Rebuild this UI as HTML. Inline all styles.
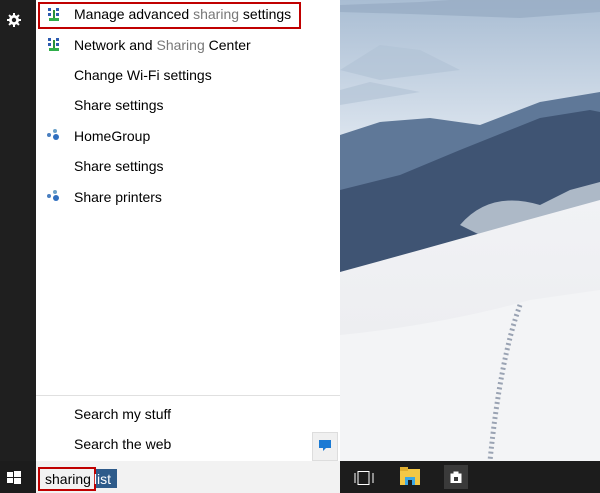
<!DOCTYPE html>
<html><head><style>
*{margin:0;padding:0;box-sizing:border-box}
body{width:600px;height:493px;overflow:hidden;position:relative;background:#1f1f1f;font-family:"Liberation Sans",sans-serif;}
#left{position:absolute;left:0;top:0;width:36px;height:461px;background:#1f1f1f}
#panel{position:absolute;left:36px;top:0;width:304px;height:461px;background:#fff}
.it{position:absolute;left:38px;font-size:14px;color:#000;line-height:16px}
.g{color:#777}
#wall{position:absolute;left:340px;top:0;width:260px;height:461px}
#tb{position:absolute;left:0;top:461px;width:600px;height:32px;background:#1c1c1c}
#sb{position:absolute;left:36px;top:461px;width:304px;height:32px;background:#f2f2f2}
</style></head><body>
<div id="left">
<svg style="position:absolute;left:6px;top:12px" width="16" height="16" viewBox="0 0 16 16"><g fill="#fff"><circle cx="8" cy="8" r="5"/><rect x="7" y="1" width="2" height="14"/><rect x="1" y="7" width="14" height="2"/><rect x="7" y="1" width="2" height="14" transform="rotate(45 8 8)"/><rect x="7" y="1" width="2" height="14" transform="rotate(-45 8 8)"/></g><circle cx="8" cy="8" r="2.2" fill="#1f1f1f"/></svg>
</div>
<div id="panel">
<div style="position:absolute;left:2px;top:2px;width:263px;height:27px;border:2px solid #c00000"></div>
<svg style="position:absolute;left:11px;top:7px" width="14" height="15"><g fill="#2d5bb0"><rect x="1" y="1" width="3" height="3"/><rect x="9" y="1" width="3" height="3"/><rect x="1" y="6" width="3" height="3"/><rect x="9" y="6" width="3" height="3"/></g><rect x="6" y="3" width="2" height="8" fill="#2a8f3a"/><rect x="2" y="11" width="10" height="3" fill="#2fae4a"/></svg>
<svg style="position:absolute;left:11px;top:37px" width="14" height="15"><g fill="#2d5bb0"><rect x="1" y="1" width="3" height="3"/><rect x="9" y="1" width="3" height="3"/><rect x="1" y="6" width="3" height="3"/><rect x="9" y="6" width="3" height="3"/></g><rect x="6" y="3" width="2" height="8" fill="#2a8f3a"/><rect x="2" y="11" width="10" height="3" fill="#2fae4a"/></svg>
<svg style="position:absolute;left:10px;top:128px" width="16" height="14"><circle cx="3" cy="7" r="2" fill="#4a7fc0"/><circle cx="9" cy="3" r="2" fill="#6aa0c8"/><circle cx="10" cy="9" r="3" fill="#2f6fbf"/></svg>
<svg style="position:absolute;left:10px;top:189px" width="16" height="14"><circle cx="3" cy="7" r="2" fill="#4a7fc0"/><circle cx="9" cy="3" r="2" fill="#6aa0c8"/><circle cx="10" cy="9" r="3" fill="#2f6fbf"/></svg>
<div class="it" style="top:6px">Manage advanced <span class="g">sharing</span> settings</div>
<div class="it" style="top:37px">Network and <span class="g">Sharing</span> Center</div>
<div class="it" style="top:67px">Change Wi-Fi settings</div>
<div class="it" style="top:97px">Share settings</div>
<div class="it" style="top:128px">HomeGroup</div>
<div class="it" style="top:158px">Share settings</div>
<div class="it" style="top:189px">Share printers</div>
<div style="position:absolute;left:0;top:395px;width:304px;height:1px;background:#e0e0e0"></div>
<div class="it" style="top:406px">Search my stuff</div>
<div class="it" style="top:436px">Search the web</div>
<div style="position:absolute;left:276px;top:432px;width:26px;height:29px;background:#f0f0f0;border:1px solid #ddd"></div>
<svg style="position:absolute;left:283px;top:440px" width="12" height="12"><path d="M0 0H12V8H7L4 11V8H0Z" fill="#1a7ad4"/></svg>
</div>
<svg id="wall" viewBox="0 0 260 461" preserveAspectRatio="none">
<defs><linearGradient id="sky" x1="0" y1="0" x2="0" y2="1"><stop offset="0" stop-color="#a9bdd3"/><stop offset="0.3" stop-color="#dbe4ee"/><stop offset="1" stop-color="#cfdbe7"/></linearGradient>
<linearGradient id="snow" x1="0" y1="0" x2="0" y2="1"><stop offset="0" stop-color="#f1f2f5"/><stop offset="1" stop-color="#e9eaed"/></linearGradient></defs>
<rect width="260" height="461" fill="url(#sky)"/>
<path d="M0 5L80 2L110 0H260V12L180 18L70 14L0 12Z" fill="#98adc4" opacity=".8"/>
<path d="M0 70L40 45L80 50L120 70L40 80Z" fill="#b2c3d6" opacity=".7"/>
<path d="M0 90L30 82L80 92L0 105Z" fill="#b0c1d4" opacity=".6"/>
<path d="M0 135L40 122L90 118L140 125L200 102L260 92V461H0Z" fill="#5f7898"/>
<path d="M0 190L60 175L120 150L200 118L250 110L260 112V461H0Z" fill="#3f5473"/>
<path d="M120 225Q150 190 200 205L230 190L260 182V240L140 235Z" fill="#c9d2dc" opacity=".8"/>
<path d="M0 272L80 250L180 222L260 200V461H0Z" fill="url(#snow)"/>
<path d="M0 335Q100 325 190 300L260 290V461H0Z" fill="#f3f4f6"/>
<path d="M180 305Q160 360 150 461" stroke="#9aa3b3" stroke-width="5" fill="none" stroke-dasharray="2 3"/>
</svg>
<div id="tb">
<svg style="position:absolute;left:7px;top:10px" width="14" height="14"><g fill="#fff"><rect x="0" y="1" width="6" height="5"/><rect x="7" y="0" width="7" height="6"/><rect x="0" y="7" width="6" height="5"/><rect x="7" y="7" width="7" height="6"/></g></svg>
<svg style="position:absolute;left:354px;top:10px" width="20" height="14"><rect x="4" y="0.5" width="11" height="13" fill="none" stroke="#fff"/><path d="M1 2V12M19 2V12" stroke="#fff"/></svg>
<svg style="position:absolute;left:400px;top:6px" width="20" height="20"><rect x="0" y="2" width="20" height="16" fill="#f3c846"/><rect x="0" y="0" width="8" height="4" fill="#e0ae2f"/><rect x="5" y="10" width="10" height="8" fill="#3ca7e4"/><rect x="8" y="13" width="4" height="5" fill="#1c1c1c"/></svg>
<div style="position:absolute;left:444px;top:4px;width:24px;height:24px;background:#3a3a3a"></div>
<svg style="position:absolute;left:450px;top:10px" width="12" height="12"><path d="M1 3H11V12H1Z M4 3V1H8V3" fill="#fff" stroke="#fff"/><rect x="4" y="6" width="4" height="4" fill="#3a3a3a"/></svg>
</div>
<div id="sb">
<div style="position:absolute;left:2px;top:6px;width:58px;height:24px;border:2px solid #c00000"></div>
<div style="position:absolute;left:60px;top:8px;width:21px;height:19px;background:#2e5b8a"></div>
<div style="position:absolute;left:9px;top:10px;font-size:14px;color:#000">sharing<span style="color:#fff;padding-left:3px">list</span></div>
</div>
</body></html>
